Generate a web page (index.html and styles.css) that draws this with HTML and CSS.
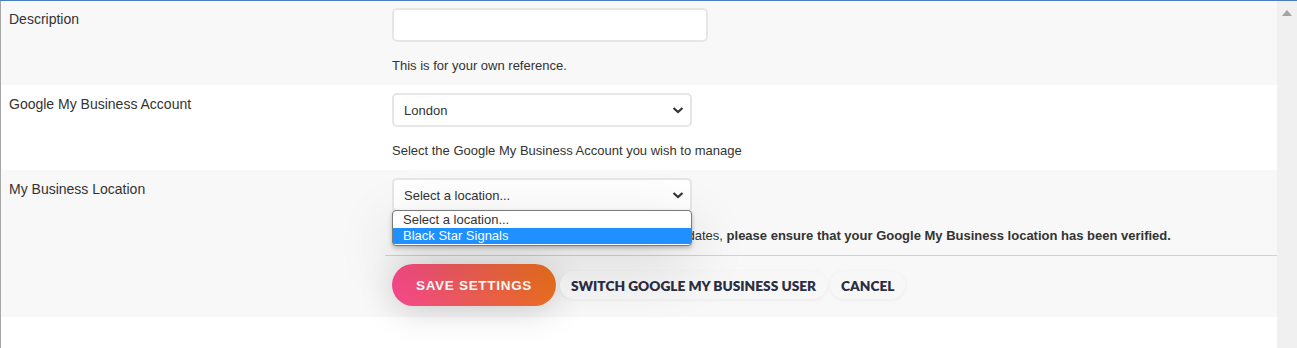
FILE: index.html
```html
<!DOCTYPE html>
<html lang="en">
  <head>
    <meta charset="UTF-8" />
    <title>Google My Business Settings</title>
    <link rel="stylesheet" href="styles.css">
  </head>
  <body>
    <div class="frame">
      <div class="content">
        <!-- Description -->
        <div class="row row-first shaded">
          <div class="label">Description</div>
          <div class="field">
            <div class="text-input"></div>
            <p class="help">This is for your own reference.</p>
          </div>
        </div>

        <!-- Account -->
        <div class="row">
          <div class="label">Google My Business Account</div>
          <div class="field">
            <div class="select-box">
              <span>London</span>
              <svg class="chevron" width="12" height="8" viewBox="0 0 12 8"><path d="M1.5 2 L6 6 L10.5 2" fill="none" stroke="#333" stroke-width="2.2"/></svg>
            </div>
            <p class="help">Select the Google My Business Account you wish to manage</p>
          </div>
        </div>

        <!-- Location -->
        <div class="shaded">
          <div class="row">
            <div class="label">My Business Location</div>
            <div class="field">
              <div class="select-wrap">
                <div class="select-box">
                  <span>Select a location...</span>
                  <svg class="chevron" width="12" height="8" viewBox="0 0 12 8"><path d="M1.5 2 L6 6 L10.5 2" fill="none" stroke="#333" stroke-width="2.2"/></svg>
                </div>
                <!-- open native list -->
                <ul class="dropdown">
                  <li>Select a location...</li>
                  <li class="selected">Black Star Signals</li>
                </ul>
              </div>
              <p class="help">For your posts to go out as Google My Business updates, <b>please ensure that your Google My Business location has been verified.</b></p>
            </div>
          </div>

          <div class="actions">
            <button class="btn btn-save">SAVE SETTINGS</button>
            <button class="btn btn-plain">SWITCH GOOGLE MY BUSINESS USER</button>
            <button class="btn btn-plain">CANCEL</button>
          </div>
        </div>
      </div>

      <div class="scrollbar">
        <svg width="10" height="6" viewBox="0 0 10 6"><path d="M5 0 L10 6 L0 6 Z" fill="#a3a3a3"/></svg>
      </div>
    </div>
  </body>
</html>
```

FILE: styles.css
```css
/* ============ Base ============ */
html,
body {
  margin: 0;
  height: 100%;
  background: #fff;
  font-family: "Liberation Sans", Arial, sans-serif;
  color: #333;
}

.frame {
  display: flex;
  height: 100%;
  border-top: 1px solid #4a7cc0;
  box-sizing: border-box;
}

.content {
  flex: 1 1 auto;
  border-left: 1px solid #a6a6a6;
}

.scrollbar {
  flex: 0 0 20px;
  background: #f0f0f0;
  display: flex;
  justify-content: center;
  padding-top: 9px;
  box-sizing: border-box;
}

/* ============ Rows ============ */
.shaded {
  background: #f8f8f8;
}

.row {
  display: grid;
  grid-template-columns: 383px 1fr;
  padding: 8px 0 11px 8px;
}
.row-first {
  padding-top: 7px;
}

.label {
  font-size: 14px;
  line-height: 20px;
  padding-top: 1px;
}

.help {
  margin: 15px 0 0;
  font-size: 13px;
  line-height: 17px;
}
.help b {
  font-weight: bold;
}

/* ============ Inputs ============ */
.text-input {
  width: 316px;
  height: 34px;
  box-sizing: border-box;
  border: 2px solid #e6e6e6;
  border-radius: 5px;
  background: #fff;
}

.select-wrap {
  position: relative;
  width: 300px;
}

.select-box {
  width: 300px;
  height: 34px;
  box-sizing: border-box;
  border: 2px solid #e6e6e6;
  border-radius: 5px;
  background: #fff;
  display: flex;
  align-items: center;
  justify-content: space-between;
  padding: 0 6px 0 10px;
  font-size: 13px;
}

.dropdown {
  position: absolute;
  left: 0;
  top: 32px;
  width: 298px;
  margin: 0;
  padding: 1px 0;
  list-style: none;
  background: #fff;
  border: 1px solid #7a7a7a;
  border-radius: 4px;
  box-shadow: 0 2px 4px rgba(0, 0, 0, 0.25), 0 18px 60px rgba(0, 0, 0, 0.16);
  overflow: hidden;
  z-index: 2;
}
.dropdown li {
  font-size: 13px;
  line-height: 16px;
  padding: 0 10px;
}
.dropdown li.selected {
  background: #1e90ff;
  color: #fff;
}

/* ============ Actions ============ */
.actions {
  margin-left: 384px;
  border-top: 1px solid #c9d2e8;
  padding: 8px 0 11px 7px;
  display: flex;
  align-items: center;
  gap: 4px;
}

.btn {
  border: 0;
  border-radius: 999px;
  cursor: pointer;
  font-weight: bold;
}

.btn-save {
  height: 42px;
  width: 164px;
  font-family: "Liberation Sans", Arial, sans-serif;
  font-size: 13.5px;
  letter-spacing: 0.7px;
  color: #fff;
  background: linear-gradient(75deg, #f6468f 0%, #ee5a5e 40%, #ea7019 100%);
  box-shadow: 0 4px 34px rgba(0, 0, 0, 0.18);
}

.btn-plain {
  height: 28px;
  padding: 0 11px;
  font-family: Lato, "Open Sans", sans-serif;
  font-weight: 800;
  font-size: 13.7px;
  color: #2b2d42;
  background: #f7f7f7;
  box-shadow: 0 1px 4px rgba(0, 0, 0, 0.06);
}
.btn-plain + .btn-plain {
  margin-left: -1px;
}
```
